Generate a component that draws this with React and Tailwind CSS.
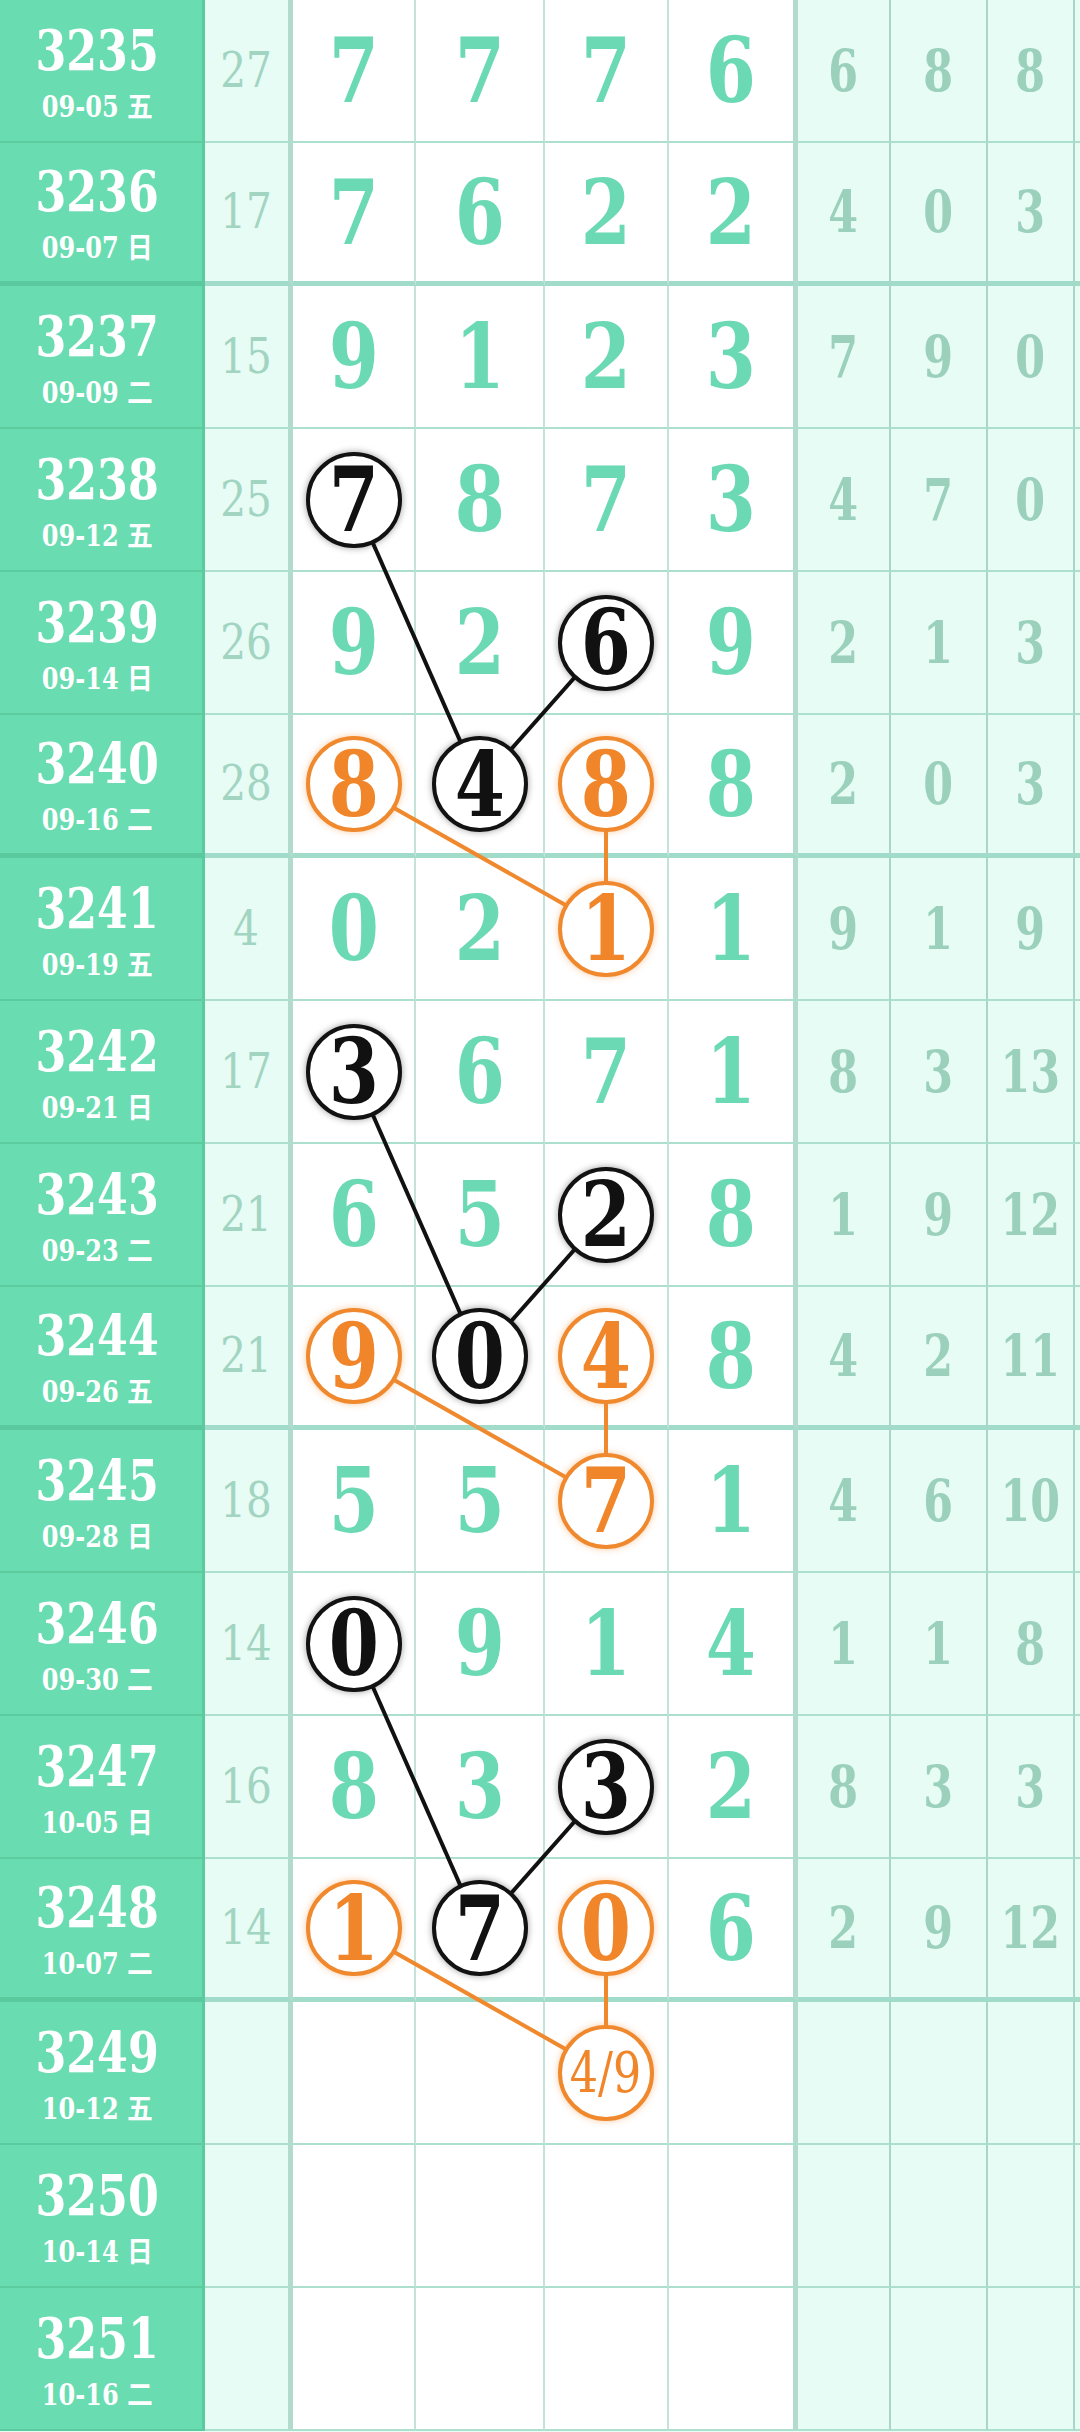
import React from 'react';

const rows = [
  { no: '3235', date: '09-05', wd: '五', sum: '27', d: ['7', '7', '7', '6'], x: ['6', '8', '8'] },
  { no: '3236', date: '09-07', wd: '日', sum: '17', d: ['7', '6', '2', '2'], x: ['4', '0', '3'] },
  { no: '3237', date: '09-09', wd: '二', sum: '15', d: ['9', '1', '2', '3'], x: ['7', '9', '0'] },
  { no: '3238', date: '09-12', wd: '五', sum: '25', d: ['7', '8', '7', '3'], x: ['4', '7', '0'], c: { 0: 'k' } },
  { no: '3239', date: '09-14', wd: '日', sum: '26', d: ['9', '2', '6', '9'], x: ['2', '1', '3'], c: { 2: 'k' } },
  { no: '3240', date: '09-16', wd: '二', sum: '28', d: ['8', '4', '8', '8'], x: ['2', '0', '3'], c: { 0: 'o', 1: 'k', 2: 'o' } },
  { no: '3241', date: '09-19', wd: '五', sum: '4', d: ['0', '2', '1', '1'], x: ['9', '1', '9'], c: { 2: 'o' } },
  { no: '3242', date: '09-21', wd: '日', sum: '17', d: ['3', '6', '7', '1'], x: ['8', '3', '13'], c: { 0: 'k' } },
  { no: '3243', date: '09-23', wd: '二', sum: '21', d: ['6', '5', '2', '8'], x: ['1', '9', '12'], c: { 2: 'k' } },
  { no: '3244', date: '09-26', wd: '五', sum: '21', d: ['9', '0', '4', '8'], x: ['4', '2', '11'], c: { 0: 'o', 1: 'k', 2: 'o' } },
  { no: '3245', date: '09-28', wd: '日', sum: '18', d: ['5', '5', '7', '1'], x: ['4', '6', '10'], c: { 2: 'o' } },
  { no: '3246', date: '09-30', wd: '二', sum: '14', d: ['0', '9', '1', '4'], x: ['1', '1', '8'], c: { 0: 'k' } },
  { no: '3247', date: '10-05', wd: '日', sum: '16', d: ['8', '3', '3', '2'], x: ['8', '3', '3'], c: { 2: 'k' } },
  { no: '3248', date: '10-07', wd: '二', sum: '14', d: ['1', '7', '0', '6'], x: ['2', '9', '12'], c: { 0: 'o', 1: 'k', 2: 'o' } },
  { no: '3249', date: '10-12', wd: '五', sum: '', d: ['', '', '4/9', ''], x: ['', '', ''], c: { 2: 'o' } },
  { no: '3250', date: '10-14', wd: '日', sum: '', d: ['', '', '', ''], x: ['', '', ''] },
  { no: '3251', date: '10-16', wd: '二', sum: '', d: ['', '', '', ''], x: ['', '', ''] },
];

// 每4期一组，组尾画粗线
const thick = [1, 5, 9, 13];

// 连线坐标（列中心 / 行中心）
const cx = [353.5, 479.5, 606, 731];
const cy = (i) => i * 143 + 70;

const links = [];
[3, 7, 11].forEach((s) => {
  links.push({ a: [0, s], b: [1, s + 2], k: 'k' });
  links.push({ a: [2, s + 1], b: [1, s + 2], k: 'k' });
  links.push({ a: [0, s + 2], b: [2, s + 3], k: 'o' });
  links.push({ a: [2, s + 2], b: [2, s + 3], k: 'o' });
});

const serif = '"DejaVu Serif Condensed", "DejaVu Serif", serif';

function Ball({ v, kind }) {
  const small = v.length > 1;
  return (
    <div
      className={`relative z-10 flex h-[96px] w-[96px] items-center justify-center rounded-full border-[4px] bg-white ${
        kind === 'o'
          ? 'border-[#f0892e] text-[#f0852a] shadow-[0_0_7px_rgba(240,137,46,0.45)]'
          : 'border-[#121212] text-[#111111] shadow-[0_0_7px_rgba(0,0,0,0.4)]'
      }`}
    >
      {small ? (
        <span className="inline-block text-[56px] leading-none font-normal scale-x-[0.88]">{v}</span>
      ) : (
        <span className="inline-block text-[89px] leading-none font-bold scale-x-[0.9]">{v}</span>
      )}
    </div>
  );
}

function Row({ r, i }) {
  const t = thick.includes(i);
  const hb = t ? 'border-b-[5px] border-b-[#a1dbc9]' : 'border-b-2 border-b-[#addfcf]';
  return (
    <div className="flex h-[143px]">
      <div
        className={`flex w-[205px] flex-col items-center justify-center border-r-[3px] border-r-[#5bcb9f] bg-[#69dcb1] pr-2 text-white ${
          t ? 'border-b-[5px] border-b-[#5ac99d]' : 'border-b-2 border-b-[#5ccc9f]'
        }`}
      >
        <span className="inline-block text-[56px] font-bold leading-[70px] scale-x-[0.88]">{r.no}</span>
        <span className="inline-block text-[29px] font-bold leading-[40px] scale-x-[0.92]">
          {r.date}{' '}
          <span style={{ fontFamily: '"Noto Sans CJK SC", sans-serif' }} className="text-[28px]">
            {r.wd}
          </span>
        </span>
      </div>
      <div
        className={`flex w-[88px] items-center justify-center border-r-[5px] border-r-[#b2dbcd] bg-[#e7fcf4] text-[49px] font-normal text-[#a2d4c2] ${hb}`}
      >
        <span className="inline-block scale-x-[0.92]">{r.sum}</span>
      </div>
      {r.d.map((v, j) => {
        const kind = r.c && r.c[j];
        const w = ['w-[123px]', 'w-[129px]', 'w-[124px]', 'w-[129px]'][j];
        const br = j === 3 ? 'border-r-[5px] border-r-[#b2dbcd]' : 'border-r-2 border-r-[#c3e3d9]';
        return (
          <div key={j} className={`flex ${w} items-center justify-center bg-white ${br} ${hb}`}>
            {kind ? (
              <Ball v={v} kind={kind} />
            ) : (
              <span className="inline-block text-[89px] font-bold leading-none text-[#6bd9b3] scale-x-[0.9]">{v}</span>
            )}
          </div>
        );
      })}
      {r.x.map((v, j) => {
        const w = ['w-[93px]', 'w-[97px]', 'w-[87px]'][j];
        return (
          <div
            key={j}
            className={`flex ${w} items-center justify-center border-r-2 border-r-[#a9d6c7] bg-[#e7fcf4] text-[58px] font-bold leading-none text-[#9ad0bc] ${hb}`}
          >
            <span className="inline-block scale-x-[0.82]">{v}</span>
          </div>
        );
      })}
      <div className={`flex-1 bg-[#e7fcf4] ${hb}`} />
    </div>
  );
}

export default function App() {
  return (
    <div className="min-h-[2432px] w-[1080px] bg-[#e7fcf4]" style={{ fontFamily: serif }}>
      <div className="relative">
        <svg className="pointer-events-none absolute left-0 top-0" width="1080" height="2432">
          {links.map((l, k) => (
            <line
              key={k}
              x1={cx[l.a[0]]}
              y1={cy(l.a[1])}
              x2={cx[l.b[0]]}
              y2={cy(l.b[1])}
              stroke={l.k === 'o' ? '#f0892e' : '#111111'}
              strokeWidth={4}
            />
          ))}
        </svg>
        {rows.map((r, i) => (
          <Row key={r.no} r={r} i={i} />
        ))}
      </div>
    </div>
  );
}
